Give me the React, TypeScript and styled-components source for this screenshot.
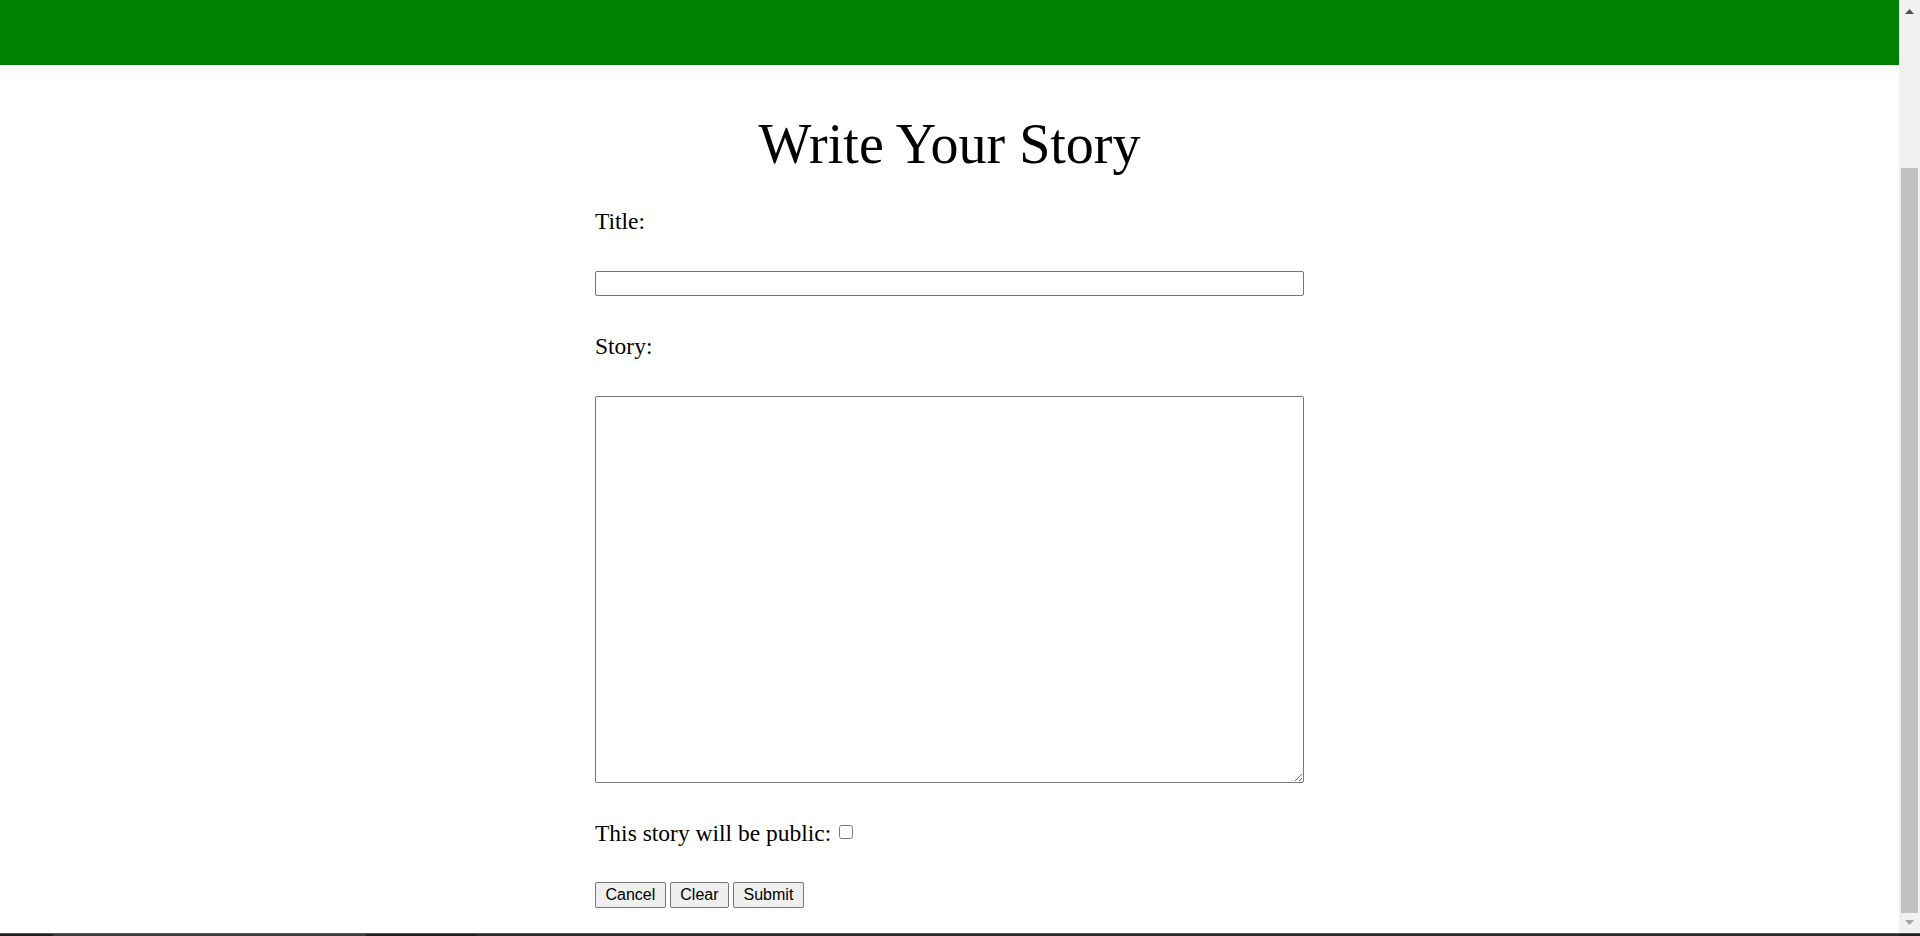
import styled, { createGlobalStyle } from "styled-components";

const GlobalStyle = createGlobalStyle`
  html, body {
    margin: 0;
    height: 100%;
    overflow: hidden;
  }
  body {
    background: #fff;
    font-family: "Liberation Serif", "Times New Roman", serif;
    color: #000;
  }
`;

const Shell = styled.div`
  display: flex;
  height: 936px;
`;

const Page = styled.div`
  flex: 1;
  display: flex;
  flex-direction: column;
`;

const Header = styled.header`
  height: 65px;
  background: #008000;
`;

const Main = styled.main`
  display: flex;
  flex-direction: column;
  align-items: center;
  padding: 48px 0 27px;
`;

const Heading = styled.h1`
  margin: 0;
  font-size: 56px;
  line-height: 62px;
  font-weight: normal;
  text-align: center;
`;

const Form = styled.form`
  width: 709px;
  margin-top: 32px;
  display: flex;
  flex-direction: column;
  gap: 36px;
`;

const FieldLabel = styled.label`
  font-size: 23.5px;
  line-height: 28px;
`;

const TextInput = styled.input`
  box-sizing: border-box;
  width: 100%;
  height: 25px;
  margin: 0;
  border: 1px solid #767676;
  border-radius: 2px;
  font-size: 16px;
`;

const StoryArea = styled.textarea`
  box-sizing: border-box;
  width: 100%;
  height: 387px;
  margin: 0;
  border: 1px solid #767676;
  border-radius: 2px;
  font-size: 16px;
`;

const CheckRow = styled.label`
  display: flex;
  align-items: center;
  gap: 8px;
  font-size: 23.5px;
  line-height: 28px;
`;

const Check = styled.input`
  width: 14px;
  height: 14px;
  margin: 0;
  position: relative;
  top: -1px;
`;

const ButtonRow = styled.div`
  display: flex;
  gap: 4px;
  margin-top: -1px;
`;

const Button = styled.button`
  box-sizing: border-box;
  height: 26px;
  padding: 3px 9.5px;
  border: 1px solid #767676;
  border-radius: 2px;
  background: #efefef;
  font-family: "Liberation Sans", Arial, sans-serif;
  font-size: 16px;
  line-height: 18px;
  color: #000;
`;

const Scrollbar = styled.div`
  width: 21px;
  display: flex;
  flex-direction: column;
  background: #f1f1f1;
`;

const ScrollButton = styled.div`
  height: 21px;
  display: flex;
  justify-content: center;
  align-items: ${(p: { $end?: boolean }) => (p.$end ? "flex-start" : "flex-end")};
  padding: ${(p: { $end?: boolean }) => (p.$end ? "5px 0 0" : "0 0 7px")};
  box-sizing: border-box;
`;

const Track = styled.div`
  flex: 1;
  display: flex;
  flex-direction: column;
  padding: 147px 2px 2px;
`;

const Thumb = styled.div`
  flex: 1;
  background: #c1c1c1;
`;

const TaskbarEdge = styled.div`
  position: fixed;
  left: 0;
  right: 0;
  bottom: 0;
  height: 3px;
  box-sizing: border-box;
  border-top: 1px solid #555;
  background: linear-gradient(
    90deg,
    #1f1f1f 0 53px,
    #3c3c3c 53px 366px,
    #1f1f1f 366px 475px,
    #2b2b2b 475px 1899px,
    #1f1f1f 1899px
  );
`;

const Arrow = ({ up, color }: { up?: boolean; color: string }) => (
  <svg width="9" height="5" viewBox="0 0 9 5">
    <path d={up ? "M4.5 0L9 5H0Z" : "M0 0H9L4.5 5Z"} fill={color} />
  </svg>
);

export default function App() {
  return (
    <>
      <GlobalStyle />
      <Shell>
        <Page>
          <Header />
          <Main>
            <Heading>Write Your Story</Heading>
            <Form onSubmit={(e) => e.preventDefault()}>
              <FieldLabel htmlFor="title">Title:</FieldLabel>
              <TextInput id="title" type="text" />
              <FieldLabel htmlFor="story">Story:</FieldLabel>
              <StoryArea id="story" />
              <CheckRow>
                This story will be public:
                <Check type="checkbox" />
              </CheckRow>
              <ButtonRow>
                <Button type="button">Cancel</Button>
                <Button type="reset">Clear</Button>
                <Button type="submit">Submit</Button>
              </ButtonRow>
            </Form>
          </Main>
        </Page>
        <Scrollbar>
          <ScrollButton>
            <Arrow up color="#505050" />
          </ScrollButton>
          <Track>
            <Thumb />
          </Track>
          <ScrollButton $end>
            <Arrow color="#a3a3a3" />
          </ScrollButton>
        </Scrollbar>
      </Shell>
      <TaskbarEdge />
    </>
  );
}
